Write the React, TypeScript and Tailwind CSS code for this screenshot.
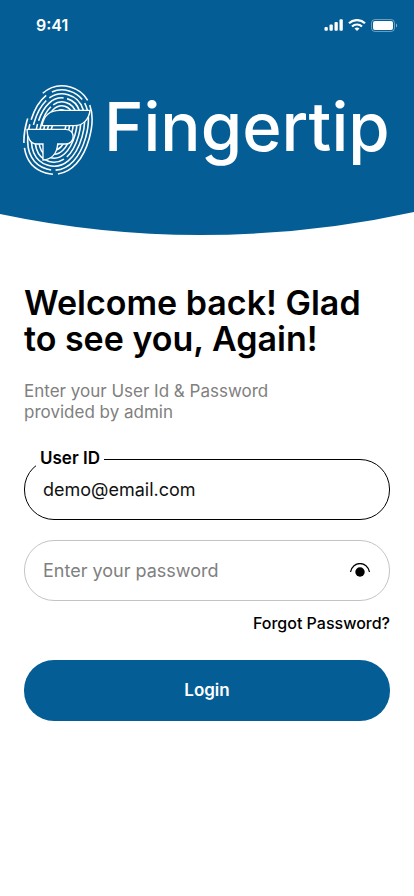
import { useState } from "react";

const FONT = "font-[Inter,'Open_Sans',sans-serif]";
const INPUT =
  "w-full bg-transparent text-lg text-[#111] outline-none placeholder:text-[#808080]";

function StatusBar() {
  return (
    <div className="flex h-12 items-center justify-between pt-0.5 pr-4 pl-9">
      <span className="text-base font-semibold">9:41</span>
      <div className="flex items-center gap-1">
        <svg width="20" height="12" viewBox="0 0 20 12" fill="currentColor" aria-hidden="true">
          <rect x="0.500" y="8" width="3.300" height="3.700" rx="1" />
          <rect x="5.500" y="5.500" width="3.300" height="6.200" rx="1" />
          <rect x="10.500" y="3" width="3.300" height="8.700" rx="1" />
          <rect x="15.500" y="0.300" width="3.300" height="11.400" rx="1" />
        </svg>
        <svg width="18" height="12" viewBox="0 0 18 12" fill="none" stroke="currentColor" strokeWidth="2.200" aria-hidden="true">
          <path d="M1 4.300a11.500 11.500 0 0 1 16 0" />
          <path d="M4 7.500a7.200 7.200 0 0 1 10 0" />
          <path d="M6.500 9.600a4 4 0 0 1 5 0L9 12z" fill="currentColor" stroke="none" />
        </svg>
        <svg width="28" height="13" viewBox="0 0 28 13" fill="none" aria-hidden="true">
          <rect x="1.500" y="0.500" width="23" height="12" rx="3.500" stroke="currentColor" opacity="0.4" />
          <rect x="3" y="2" width="20" height="9" rx="2" fill="currentColor" />
          <path d="M26 4.500v4c1.600-.6 1.600-3.400 0-4z" fill="currentColor" opacity="0.5" />
        </svg>
      </div>
    </div>
  );
}

// Fingerprint ridges from the outside in, dashes are in percent of the ring
const RINGS = [
  { rx: 97, ry: 134, dash: "20 2 17 2 10 12 21 2 14 0" },
  { rx: 86, ry: 122, dash: "21 2 21 2 3 2 13 3 15 2 16 0" },
  { rx: 75, ry: 110, dash: "47 2 14 2 35 0" },
  { rx: 64, ry: 98, dash: "14 2 34 2 21 2 25 0" },
  { rx: 53, ry: 86, dash: "64 2 34 0" },
  { rx: 42, ry: 74, dash: "none" },
  { rx: 31, ry: 62, dash: "none" },
  { rx: 20, ry: 50, dash: "none" },
];

// An ellipse with slightly fuller shoulders
function ridge(rx: number, ry: number) {
  const kx = rx * 0.62;
  const ky = ry * 0.62;
  return `M${rx} 0C${rx} ${ky} ${kx} ${ry} 0 ${ry}S${-rx} ${ky} ${-rx} 0S${-kx} ${-ry} 0 ${-ry}S${rx} ${-ky} ${rx} 0Z`;
}

function FingerprintLogo() {
  return (
    <svg width="72" height="92" viewBox="25 22 216 276" fill="none" stroke="white" aria-hidden="true">
      <g transform="translate(133 160) rotate(16)" strokeWidth="4.700">
        {RINGS.map((ring) => (
          <path
            key={ring.rx}
            d={ridge(ring.rx, ring.ry)}
            pathLength={100}
            strokeDasharray={ring.dash}
          />
        ))}
      </g>
      <g fill="#045e95" strokeWidth="4">
        <path d="M85 147C90 118 107 101 138 101H229C226 130 206 147 182 147Z" />
        <path d="M40 158H156C186 158 186 202 156 202H132C130 232 112 248 88 250V202H68C50 202 40 182 40 158Z" />
      </g>
    </svg>
  );
}

function Header() {
  return (
    <header className="text-white">
      <div className="bg-[#045e95] pb-9">
        <StatusBar />
        <div className="flex items-center gap-2.5 pt-9 pl-[22px]">
          <FingerprintLogo />
          <span className="pb-2 text-[67px] leading-none font-medium">Fingertip</span>
        </div>
      </div>
      <svg className="block h-6 w-full" viewBox="0 0 414 24" preserveAspectRatio="none" aria-hidden="true">
        <path d="M0 0H414V0Q310 23 200 23Q100 23 0 2Z" fill="#045e95" />
      </svg>
    </header>
  );
}

function EyeIcon() {
  return (
    <svg width="22" height="16" viewBox="0 0 22 16" fill="none" aria-hidden="true">
      <path d="M1.500 9C3.500-2.300 18.500-2.300 20.500 9" stroke="black" strokeWidth="1.300" />
      <circle cx="11" cy="9" r="4.700" fill="black" />
    </svg>
  );
}

export default function App() {
  const [showPassword, setShowPassword] = useState(false);

  return (
    <div className={`min-h-screen bg-white text-black ${FONT}`}>
      <Header />
      <main className="px-6 pt-[49px]">
        <h1 className="text-[34px] leading-9 font-semibold">
          Welcome back! Glad
          <br />
          to see you, Again!
        </h1>
        <p className="mt-6 text-[17px] leading-[21px] text-[#808080]">
          Enter your User Id &amp; Password
          <br />
          provided by admin
        </p>
        <form className="mt-9" onSubmit={(e) => e.preventDefault()}>
          <div className="relative flex h-[61px] items-center rounded-[30px] border border-black px-[18px]">
            <label
              htmlFor="user-id"
              className="absolute -top-3.5 left-[11px] bg-white px-1 text-[17px] font-semibold"
            >
              User ID
            </label>
            <input id="user-id" type="text" defaultValue="demo@email.com" className={INPUT} />
          </div>
          <div className="mt-5 flex h-[61px] items-center rounded-[30px] border border-[#c4c4c4] px-[18px]">
            <input
              type={showPassword ? "text" : "password"}
              aria-label="Password"
              placeholder="Enter your password"
              className={INPUT}
            />
            <button
              type="button"
              aria-label="Show password"
              onClick={() => setShowPassword(!showPassword)}
            >
              <EyeIcon />
            </button>
          </div>
          <div className="mt-2.5 text-right">
            <a href="#forgot" className="text-base font-medium">
              Forgot Password?
            </a>
          </div>
          <button
            type="submit"
            className="mt-[25px] h-[61px] w-full rounded-[30px] bg-[#045e95] text-[17px] font-semibold text-white"
          >
            Login
          </button>
        </form>
      </main>
    </div>
  );
}
